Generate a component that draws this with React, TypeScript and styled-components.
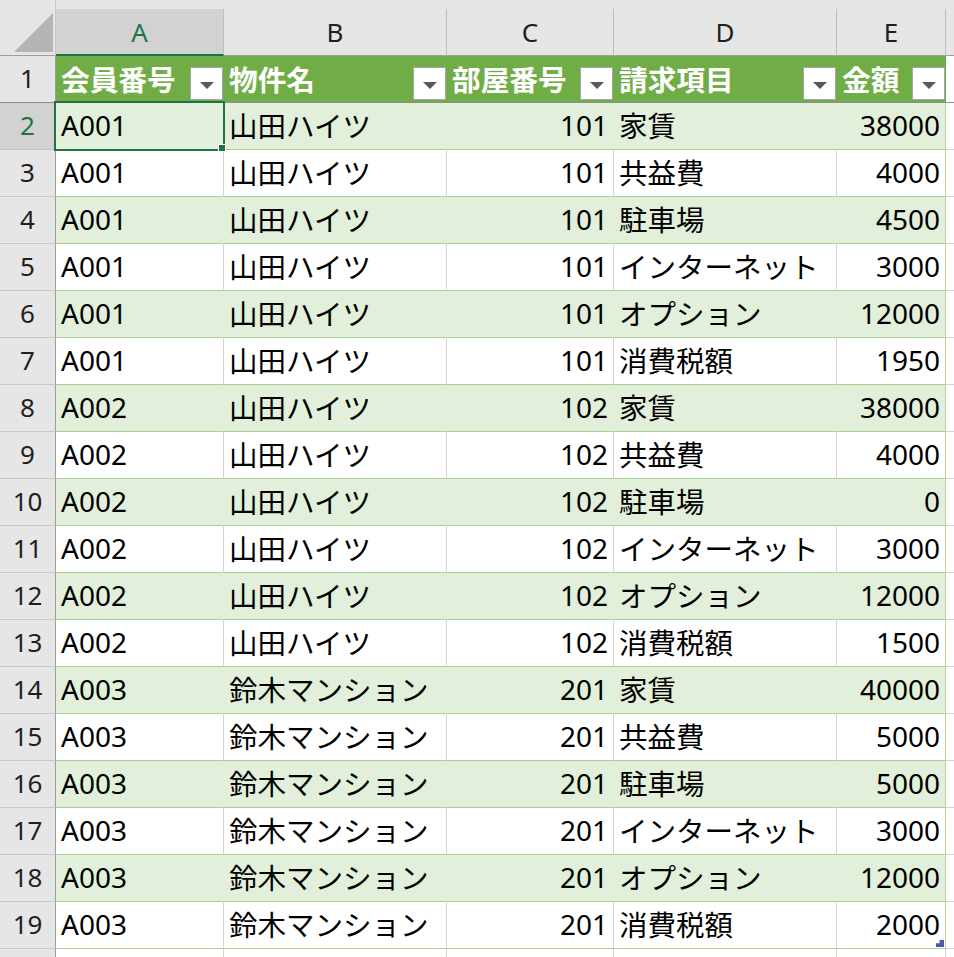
import React from "react";
import styled, { createGlobalStyle, css } from "styled-components";

const GlobalStyle = createGlobalStyle`
  html, body { margin: 0; padding: 0; background: #ffffff; overflow: hidden; }
  body { font-family: "Noto Sans", "Noto Sans CJK JP", sans-serif; }
`;

const COLS = ["A", "B", "C", "D", "E"];
const HEADERS = ["会員番号", "物件名", "部屋番号", "請求項目", "金額"];

type Row = [string, string, number, string, number];

const DATA: Row[] = [
  ["A001", "山田ハイツ", 101, "家賃", 38000],
  ["A001", "山田ハイツ", 101, "共益費", 4000],
  ["A001", "山田ハイツ", 101, "駐車場", 4500],
  ["A001", "山田ハイツ", 101, "インターネット", 3000],
  ["A001", "山田ハイツ", 101, "オプション", 12000],
  ["A001", "山田ハイツ", 101, "消費税額", 1950],
  ["A002", "山田ハイツ", 102, "家賃", 38000],
  ["A002", "山田ハイツ", 102, "共益費", 4000],
  ["A002", "山田ハイツ", 102, "駐車場", 0],
  ["A002", "山田ハイツ", 102, "インターネット", 3000],
  ["A002", "山田ハイツ", 102, "オプション", 12000],
  ["A002", "山田ハイツ", 102, "消費税額", 1500],
  ["A003", "鈴木マンション", 201, "家賃", 40000],
  ["A003", "鈴木マンション", 201, "共益費", 5000],
  ["A003", "鈴木マンション", 201, "駐車場", 5000],
  ["A003", "鈴木マンション", 201, "インターネット", 3000],
  ["A003", "鈴木マンション", 201, "オプション", 12000],
  ["A003", "鈴木マンション", 201, "消費税額", 2000],
];

const NUMERIC = [false, false, true, false, true];
const CJK = [false, true, false, true, false];

const Sheet = styled.div`
  display: grid;
  grid-template-columns: 56px 168px 223px 167px 223px 109px 1fr;
  grid-template-rows: 56px repeat(20, 47px);
  width: 954px;
  height: 957px;
  overflow: hidden;
  background: #e6e6e6;
  box-sizing: border-box;
`;

const Corner = styled.div`
  position: relative;
  background: #e6e6e6;
  border-bottom: 1px solid #9e9e9e;
  border-right: 1px solid #c8c8c8;
  box-sizing: border-box;
  &::before {
    content: "";
    position: absolute;
    left: 14px;
    top: 13px;
    width: 39px;
    height: 39px;
    background: #b4b4b4;
    clip-path: polygon(100% 0, 100% 100%, 0 100%);
  }
`;

const ColHead = styled.div<{ $selected?: boolean }>`
  align-self: end;
  height: 47px;
  box-sizing: border-box;
  display: flex;
  align-items: center;
  justify-content: center;
  font-size: 26px;
  color: #1f1f1f;
  background: #e6e6e6;
  border-right: 1px solid #bdbdbd;
  border-bottom: 1px solid #9e9e9e;
  ${(p) =>
    p.$selected &&
    css`
      background: #d2d2d2;
      color: #217346;
      border-bottom: 2px solid #217346;
    `}
`;

const RowHead = styled.div<{ $selected?: boolean; $frozen?: boolean }>`
  box-sizing: border-box;
  display: flex;
  align-items: center;
  justify-content: center;
  padding-bottom: 2px;
  font-size: 26px;
  color: #1f1f1f;
  background: ${(p) => (p.$selected ? "#d2d2d2" : "#e6e6e6")};
  ${(p) => p.$selected && "color: #217346;"}
  border-right: 1px solid #9e9e9e;
  border-bottom: 1px solid ${(p) => (p.$frozen ? "#8f8f8f" : "#c8c8c8")};
`;

const HeadCell = styled.div`
  box-sizing: border-box;
  display: flex;
  align-items: center;
  justify-content: space-between;
  padding-left: 5px;
  padding-bottom: 2px;
  background: #70ad47;
  color: #ffffff;
  font-weight: 700;
  font-size: 28.7px;
  border-right: 1px solid #70ad47;
  border-bottom: 1px solid #8f8f8f;
  white-space: nowrap;
  overflow: hidden;
`;

const FilterButton = styled.div`
  align-self: flex-end;
  width: 33px;
  height: 33px;
  flex: none;
  box-sizing: border-box;
  background: #ffffff;
  border: 1px solid #a6a6a6;
  display: flex;
  align-items: center;
  justify-content: center;
  padding-top: 3px;
  &::after {
    content: "";
    width: 0;
    height: 0;
    border-left: 7px solid transparent;
    border-right: 7px solid transparent;
    border-top: 7px solid #595959;
  }
`;

const Cell = styled.div<{ $band: boolean; $right?: boolean; $last?: boolean; $cjk?: boolean }>`
  position: relative;
  box-sizing: border-box;
  display: flex;
  align-items: center;
  justify-content: ${(p) => (p.$right ? "flex-end" : "flex-start")};
  padding: 0 5px 3px;
  font-size: ${(p) => (p.$cjk ? "28.5px" : "28px")};
  color: #000000;
  white-space: nowrap;
  background: ${(p) => (p.$band ? "#e2efda" : "#ffffff")};
  border-right: 1px solid
    ${(p) => (p.$last ? "#b4d69c" : p.$band ? "#e2efda" : "#d4d4d4")};
  border-bottom: 1px solid #a9d08e;
`;

const Filler = styled.div<{ $frozen?: boolean }>`
  box-sizing: border-box;
  background: #ffffff;
  border-bottom: 1px solid ${(p) => (p.$frozen ? "#8f8f8f" : "#d4d4d4")};
`;

const ColFiller = styled.div`
  align-self: end;
  height: 47px;
  box-sizing: border-box;
  background: #e6e6e6;
  border-bottom: 1px solid #9e9e9e;
`;

const PlainCell = styled.div`
  box-sizing: border-box;
  background: #ffffff;
  border-right: 1px solid #d4d4d4;
  border-bottom: 1px solid #d4d4d4;
`;

const ActiveOutline = styled.div`
  position: absolute;
  left: -2px;
  top: -2px;
  right: -2px;
  bottom: -2px;
  border: 2px solid #217346;
  pointer-events: none;
  z-index: 2;
`;

const FillHandle = styled.div`
  position: absolute;
  right: -3px;
  bottom: -3px;
  width: 8px;
  height: 8px;
  box-sizing: border-box;
  background: #217346;
  border: 1px solid #ffffff;
  z-index: 3;
`;

const ResizeHandle = styled.div`
  position: absolute;
  right: 1px;
  bottom: 1px;
  width: 8px;
  height: 7px;
  background: #4a5aa8;
  clip-path: polygon(100% 0, 100% 100%, 0 100%, 0 45%, 45% 45%, 45% 0);
`;

export default function App() {
  return (
    <>
      <GlobalStyle />
      <Sheet>
        <Corner />
        {COLS.map((c, i) => (
          <ColHead key={c} $selected={i === 0}>
            {c}
          </ColHead>
        ))}
        <ColFiller />

        <RowHead $frozen>1</RowHead>
        {HEADERS.map((h) => (
          <HeadCell key={h}>
            <span>{h}</span>
            <FilterButton />
          </HeadCell>
        ))}
        <Filler $frozen />

        {DATA.map((row, r) => {
          const rowNum = r + 2;
          const band = rowNum % 2 === 0;
          return (
            <React.Fragment key={rowNum}>
              <RowHead $selected={rowNum === 2}>{rowNum}</RowHead>
              {row.map((v, c) => (
                <Cell
                  key={c}
                  $band={band}
                  $right={NUMERIC[c]}
                  $cjk={CJK[c]}
                  $last={c === 4}
                >
                  {v}
                  {rowNum === 2 && c === 0 && (
                    <ActiveOutline>
                      <FillHandle />
                    </ActiveOutline>
                  )}
                  {rowNum === 19 && c === 4 && <ResizeHandle />}
                </Cell>
              ))}
              <Filler />
            </React.Fragment>
          );
        })}

        <RowHead />
        {COLS.map((c) => (
          <PlainCell key={c} />
        ))}
        <Filler />
      </Sheet>
    </>
  );
}
